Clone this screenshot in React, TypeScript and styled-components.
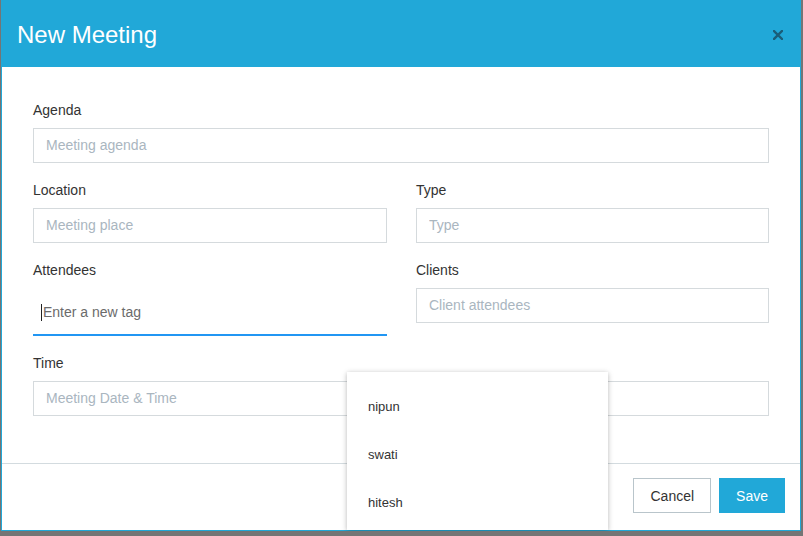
import React from 'react';
import styled, { createGlobalStyle } from 'styled-components';

const GlobalStyle = createGlobalStyle`
  html, body {
    margin: 0;
    padding: 0;
    background: #757575;
    font-family: "Liberation Sans", Arial, sans-serif;
  }
  * {
    box-sizing: border-box;
  }
`;

const Modal = styled.div`
  position: relative;
  margin-left: 1px;
  width: 800px;
  height: 531px;
  background: #fff;
  border: 1px solid #21a8d8;
  border-top: none;
  display: flex;
  flex-direction: column;
`;

const Header = styled.header`
  height: 67px;
  background: #21a8d8;
  display: flex;
  align-items: center;
  justify-content: space-between;
  padding: 3px 16px 0 16px;
  margin: 0 -1px;
`;

const Title = styled.h2`
  margin: 0;
  font-size: 24px;
  font-weight: 400;
  color: #fff;
`;

const CloseButton = styled.button`
  border: none;
  background: none;
  padding: 0;
  width: 14px;
  height: 14px;
  display: flex;
  align-items: center;
  justify-content: center;
  cursor: pointer;
`;

const Body = styled.div`
  padding: 33px 31px 47px 31px;
  display: flex;
  flex-direction: column;
  gap: 17px;
  border-bottom: 1px solid #d3dbdf;
`;

const Row = styled.div`
  display: grid;
  grid-template-columns: 354px 1fr;
  column-gap: 29px;
  align-items: start;
`;

const Field = styled.div`
  display: flex;
  flex-direction: column;
`;

const Label = styled.label`
  font-size: 14px;
  line-height: 20px;
  color: #333;
  margin-bottom: 8px;
`;

const Input = styled.input`
  height: 35px;
  width: 100%;
  border: 1px solid #d5dadd;
  border-radius: 0;
  padding: 0 12px 1px;
  font-family: inherit;
  font-size: 14px;
  color: #333;
  outline: none;
  &::placeholder {
    color: #aab6bf;
  }
`;

const TagBox = styled.div`
  height: 48px;
  border-bottom: 2px solid #2196f3;
  display: flex;
  align-items: center;
  padding-left: 8px;
  padding-top: 2px;
`;

const Caret = styled.span`
  width: 1px;
  height: 17px;
  background: #222;
  margin-right: 1px;
`;

const TagText = styled.span`
  font-size: 14px;
  color: #6b6b6b;
`;

const Footer = styled.footer`
  display: flex;
  justify-content: flex-end;
  gap: 8px;
  padding: 14px 15px 0 0;
`;

const Button = styled.button<{ primary?: boolean }>`
  height: 35px;
  padding: 0 16px;
  font-family: inherit;
  font-size: 14px;
  border-radius: 0;
  cursor: pointer;
  border: 1px solid ${({ primary }) => (primary ? '#21a8d8' : '#b9c5cb')};
  background: ${({ primary }) => (primary ? '#21a8d8' : '#fff')};
  color: ${({ primary }) => (primary ? '#fff' : '#333')};
`;

const Menu = styled.ul`
  position: absolute;
  left: 345px;
  top: 372px;
  width: 261px;
  height: 158px;
  margin: 0;
  padding: 11px 0 0;
  list-style: none;
  background: #fff;
  box-shadow: 0 1px 6px rgba(0, 0, 0, 0.18), 0 1px 4px rgba(0, 0, 0, 0.12);
  overflow: hidden;
`;

const MenuItem = styled.li`
  height: 48px;
  line-height: 48px;
  padding-left: 21px;
  font-size: 13px;
  color: #333;
`;

const attendees = ['nipun', 'swati', 'hitesh'];

const App = () => (
  <>
    <GlobalStyle />
    <Modal>
      <Header>
        <Title>New Meeting</Title>
        <CloseButton type="button" aria-label="close">
          <svg width="10" height="10" viewBox="0 0 10 10">
            <path d="M1 1L9 9M9 1L1 9" stroke="#1a5d78" strokeWidth="2.4" strokeLinecap="square" />
          </svg>
        </CloseButton>
      </Header>
      <Body>
        <Field>
          <Label>Agenda</Label>
          <Input placeholder="Meeting agenda" />
        </Field>
        <Row>
          <Field>
            <Label>Location</Label>
            <Input placeholder="Meeting place" />
          </Field>
          <Field>
            <Label>Type</Label>
            <Input placeholder="Type" />
          </Field>
        </Row>
        <Row>
          <Field>
            <Label>Attendees</Label>
            <TagBox>
              <Caret />
              <TagText>Enter a new tag</TagText>
            </TagBox>
          </Field>
          <Field>
            <Label>Clients</Label>
            <Input placeholder="Client attendees" />
          </Field>
        </Row>
        <Field>
          <Label>Time</Label>
          <Input placeholder="Meeting Date &amp; Time" />
        </Field>
      </Body>
      <Footer>
        <Button type="button">Cancel</Button>
        <Button type="button" primary>Save</Button>
      </Footer>
      <Menu>
        {attendees.map((name) => (
          <MenuItem key={name}>{name}</MenuItem>
        ))}
      </Menu>
    </Modal>
  </>
);

export default App;
